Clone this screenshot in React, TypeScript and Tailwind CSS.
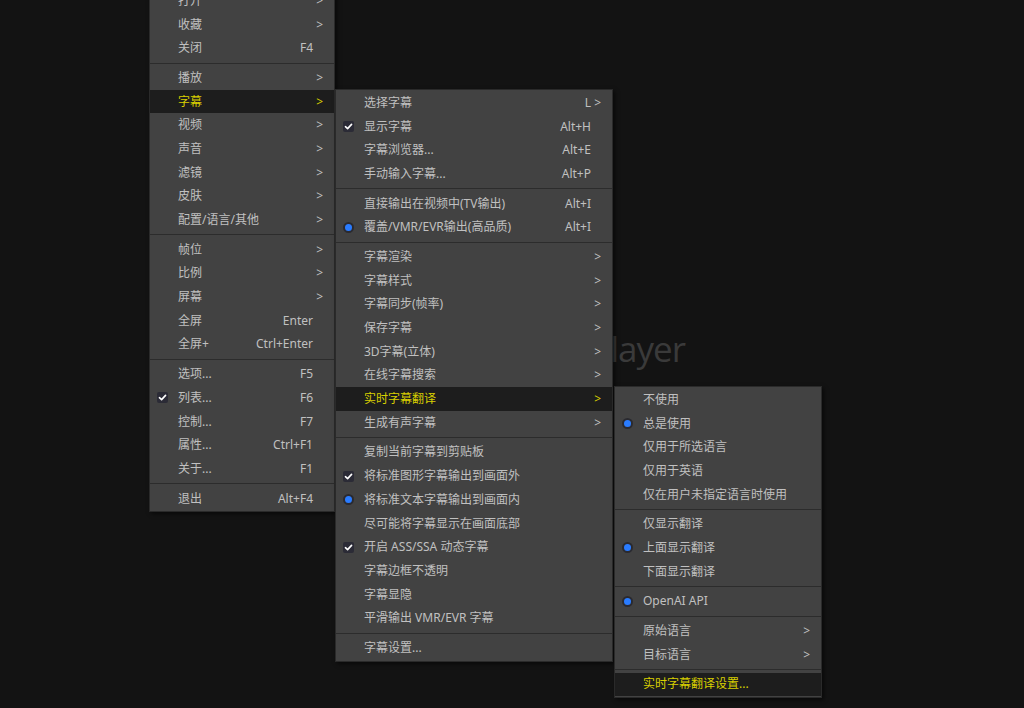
import React from "react";

type Item =
  | "sep"
  | {
      label: string;
      shortcut?: string;
      arrow?: boolean;
      mark?: "check" | "radio";
      active?: boolean;
    };

const mainMenu: Item[] = [
  { label: "打开", arrow: true },
  { label: "收藏", arrow: true },
  { label: "关闭", shortcut: "F4" },
  "sep",
  { label: "播放", arrow: true },
  { label: "字幕", arrow: true, active: true },
  { label: "视频", arrow: true },
  { label: "声音", arrow: true },
  { label: "滤镜", arrow: true },
  { label: "皮肤", arrow: true },
  { label: "配置/语言/其他", arrow: true },
  "sep",
  { label: "帧位", arrow: true },
  { label: "比例", arrow: true },
  { label: "屏幕", arrow: true },
  { label: "全屏", shortcut: "Enter" },
  { label: "全屏+", shortcut: "Ctrl+Enter" },
  "sep",
  { label: "选项...", shortcut: "F5" },
  { label: "列表...", shortcut: "F6", mark: "check" },
  { label: "控制...", shortcut: "F7" },
  { label: "属性...", shortcut: "Ctrl+F1" },
  { label: "关于...", shortcut: "F1" },
  "sep",
  { label: "退出", shortcut: "Alt+F4" },
];

const subtitleMenu: Item[] = [
  { label: "选择字幕", shortcut: "L", arrow: true },
  { label: "显示字幕", shortcut: "Alt+H", mark: "check" },
  { label: "字幕浏览器...", shortcut: "Alt+E" },
  { label: "手动输入字幕...", shortcut: "Alt+P" },
  "sep",
  { label: "直接输出在视频中(TV输出)", shortcut: "Alt+I" },
  { label: "覆盖/VMR/EVR输出(高品质)", shortcut: "Alt+I", mark: "radio" },
  "sep",
  { label: "字幕渲染", arrow: true },
  { label: "字幕样式", arrow: true },
  { label: "字幕同步(帧率)", arrow: true },
  { label: "保存字幕", arrow: true },
  { label: "3D字幕(立体)", arrow: true },
  { label: "在线字幕搜索", arrow: true },
  { label: "实时字幕翻译", arrow: true, active: true },
  { label: "生成有声字幕", arrow: true },
  "sep",
  { label: "复制当前字幕到剪贴板" },
  { label: "将标准图形字幕输出到画面外", mark: "check" },
  { label: "将标准文本字幕输出到画面内", mark: "radio" },
  { label: "尽可能将字幕显示在画面底部" },
  { label: "开启 ASS/SSA 动态字幕", mark: "check" },
  { label: "字幕边框不透明" },
  { label: "字幕显隐" },
  { label: "平滑输出 VMR/EVR 字幕" },
  "sep",
  { label: "字幕设置..." },
];

const translateMenu: Item[] = [
  { label: "不使用" },
  { label: "总是使用", mark: "radio" },
  { label: "仅用于所选语言" },
  { label: "仅用于英语" },
  { label: "仅在用户未指定语言时使用" },
  "sep",
  { label: "仅显示翻译" },
  { label: "上面显示翻译", mark: "radio" },
  { label: "下面显示翻译" },
  "sep",
  { label: "OpenAI API", mark: "radio" },
  "sep",
  { label: "原始语言", arrow: true },
  { label: "目标语言", arrow: true },
  "sep",
  { label: "实时字幕翻译设置...", active: true },
];

function Mark({ type }: { type: "check" | "radio" }) {
  if (type === "check") {
    return (
      <span className="flex h-[11px] w-[11px] items-center justify-center rounded-[2px] bg-[#2b2b36]">
        <svg viewBox="0 0 10 10" className="h-[9px] w-[9px]">
          <path
            d="M1.6 5.2 L4 7.4 L8.4 2.6"
            fill="none"
            stroke="#ffffff"
            strokeWidth="1.8"
            strokeLinecap="round"
            strokeLinejoin="round"
          />
        </svg>
      </span>
    );
  }
  return (
    <span className="flex h-[11px] w-[11px] items-center justify-center rounded-full bg-[#2a2a30]">
      <span className="h-[7px] w-[7px] rounded-full bg-[#2a7cff]" />
    </span>
  );
}

function Menu({ items, className }: { items: Item[]; className: string }) {
  return (
    <div
      className={`absolute border border-[#2a2a2a] bg-[#424242] py-px shadow-[2px_2px_4px_rgba(0,0,0,0.55)] ${className}`}
    >
      {items.map((item, i) => {
        if (item === "sep") {
          return (
            <div key={i} className="flex h-[6px] items-center">
              <div className="h-px w-full bg-[#2c2c2c]" />
            </div>
          );
        }
        const color = item.active ? "text-[#d8cf00]" : "text-[#c0c0c0]";
        return (
          <div
            key={i}
            className={`flex h-[23.7px] items-center pr-[11px] ${item.active ? "bg-[#1d1d1d]" : ""} ${color}`}
          >
            <span className="flex w-[28px] shrink-0 justify-start pl-[7px]">
              {item.mark && <Mark type={item.mark} />}
            </span>
            <span className="flex-1 whitespace-nowrap">{item.label}</span>
            {item.shortcut && <span className="whitespace-nowrap">{item.shortcut}</span>}
            <span className="w-[10px] text-right">{item.arrow ? ">" : ""}</span>
          </div>
        );
      })}
    </div>
  );
}

export default function App() {
  return (
    <div
      className="relative h-[708px] w-[1024px] overflow-hidden bg-[#131313] text-[12px] leading-none"
      style={{ fontFamily: '"Noto Sans", "Noto Sans CJK SC", sans-serif' }}
    >
      <span
        className="absolute right-[339px] top-[331px] text-[35px] leading-none tracking-[-1px] text-[#3a3a3a]"
        style={{ fontFamily: '"Open Sans", sans-serif' }}
      >
        PotPlayer
      </span>
      <Menu items={mainMenu} className="left-[149px] top-[-13px] w-[186px]" />
      <Menu items={subtitleMenu} className="left-[335px] top-[89px] w-[278px]" />
      <Menu items={translateMenu} className="left-[614px] top-[386px] w-[208px]" />
    </div>
  );
}
